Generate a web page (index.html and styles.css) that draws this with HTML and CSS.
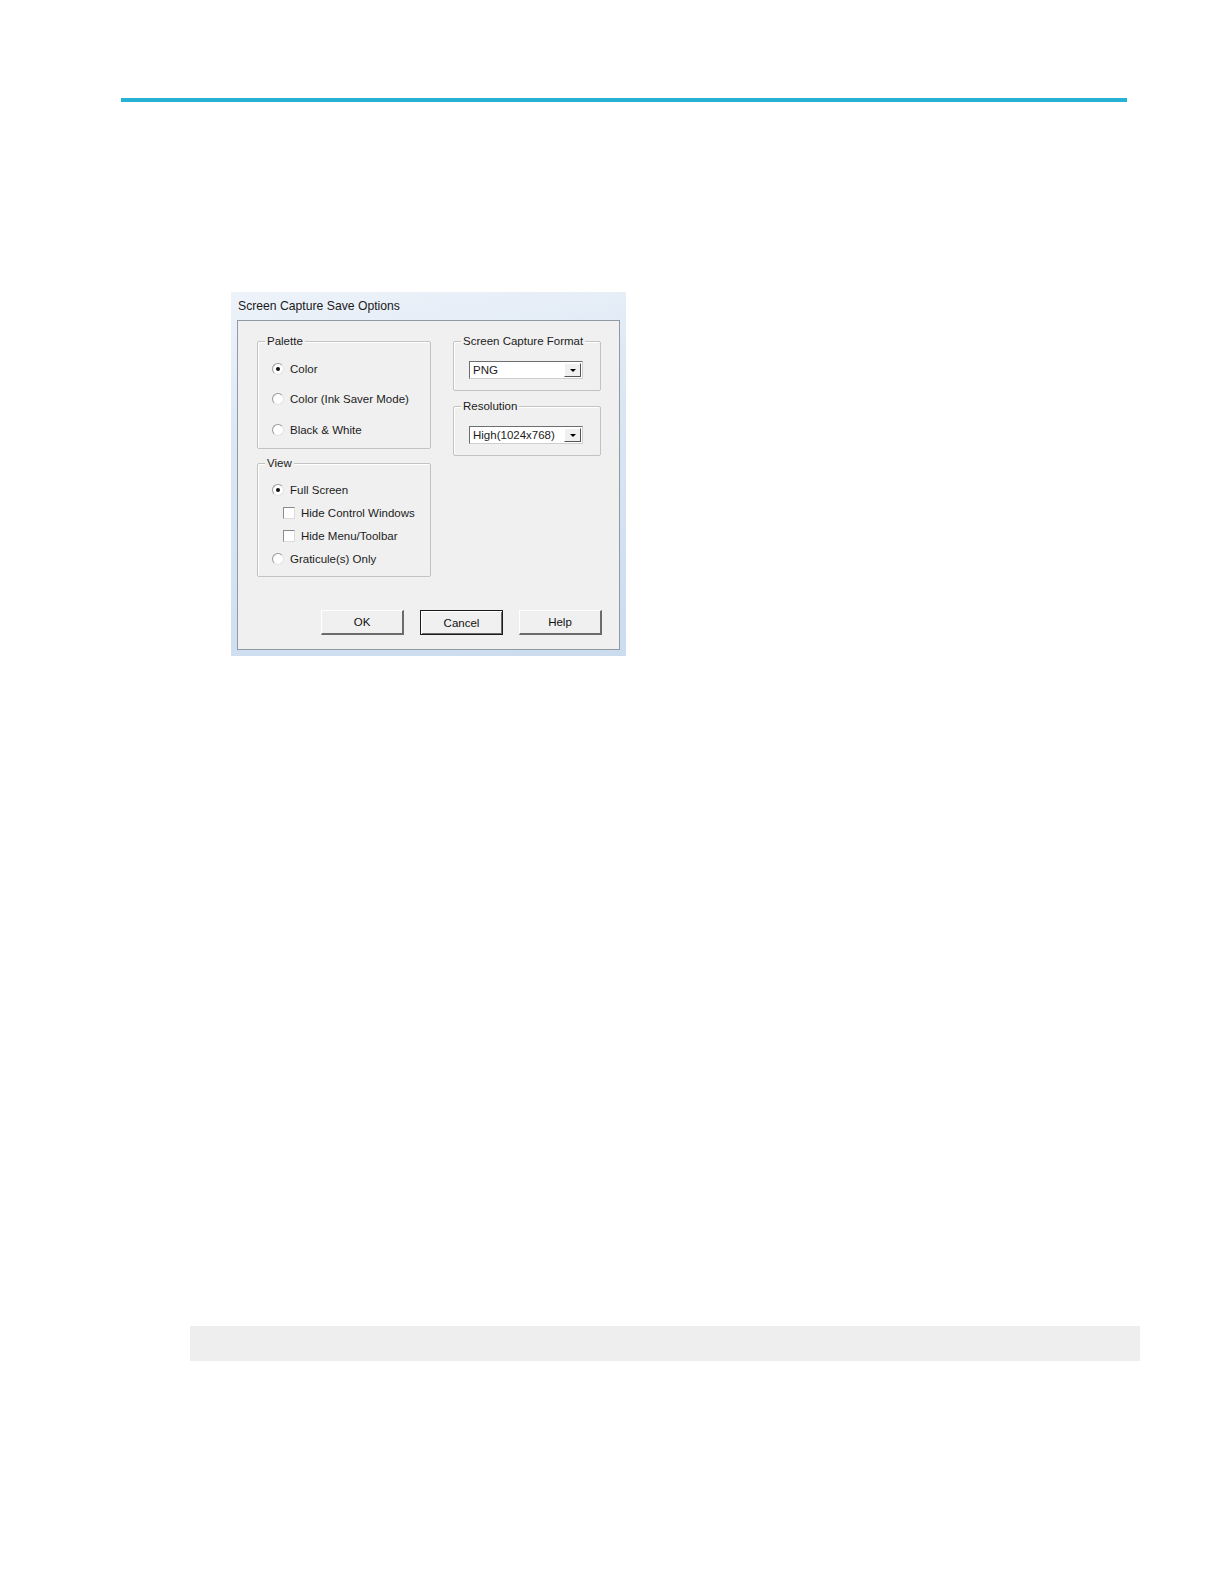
FILE: index.html
```html
<!DOCTYPE html>
<html>
<head>
<meta charset="utf-8">
<link rel="stylesheet" href="styles.css">
</head>
<body>
<div class="page">
  <div class="rule"></div>
  <div class="dialog">
    <div class="titlebar">Screen Capture Save Options</div>
    <div class="client">
      <div class="columns">
        <div class="col">
          <div class="group palette">
            <span class="legend">Palette</span>
            <div class="opt radio-row"><span class="radio checked"></span>Color</div>
            <div class="opt radio-row"><span class="radio"></span>Color (Ink Saver Mode)</div>
            <div class="opt radio-row"><span class="radio"></span>Black &amp; White</div>
          </div>
          <div class="group view">
            <span class="legend">View</span>
            <div class="vopt radio-row"><span class="radio checked"></span>Full Screen</div>
            <div class="vopt check-row"><span class="check"></span>Hide Control Windows</div>
            <div class="vopt check-row"><span class="check"></span>Hide Menu/Toolbar</div>
            <div class="vopt radio-row"><span class="radio"></span>Graticule(s) Only</div>
          </div>
        </div>
        <div class="col col-right">
          <div class="group small">
            <span class="legend">Screen Capture Format</span>
            <div class="select"><span class="sel-text">PNG</span><span class="sel-btn"><span class="tri"></span></span></div>
          </div>
          <div class="group small">
            <span class="legend">Resolution</span>
            <div class="select"><span class="sel-text">High(1024x768)</span><span class="sel-btn"><span class="tri"></span></span></div>
          </div>
        </div>
      </div>
      <div class="buttons">
        <div class="btn">OK</div>
        <div class="btn default">Cancel</div>
        <div class="btn">Help</div>
      </div>
    </div>
  </div>
  <div class="graybar"></div>
</div>
</body>
</html>
```
FILE: styles.css
```css
html, body {
  margin: 0;
  padding: 0;
  background: #ffffff;
}
.page {
  display: flex;
  flex-direction: column;
  align-items: flex-start;
  font-family: "Liberation Sans", Arial, sans-serif;
}
.rule {
  margin: 98px 0 0 121px;
  width: 1006px;
  height: 4px;
  background: #27b1d4;
}
.dialog {
  margin: 190px 0 0 231px;
  width: 395px;
  height: 364px;
  box-sizing: border-box;
  padding: 0 6px 6px 6px;
  display: flex;
  flex-direction: column;
  background: linear-gradient(170deg, #eef3fa 0%, #dce7f4 35%, #cbdcef 100%);
  border-radius: 1px;
}
.titlebar {
  height: 28px;
  display: flex;
  align-items: center;
  padding-left: 1px;
  font-size: 12.2px;
  color: #1a1a1a;
}
.client {
  flex: 1;
  background: #f0f0f0;
  border: 1px solid #8f9aa6;
  box-sizing: border-box;
  padding: 20px 0 0 19px;
  display: flex;
  flex-direction: column;
  font-size: 11.5px;
  color: #1c1c1c;
}
.columns {
  display: grid;
  grid-template-columns: 174px 148px;
  column-gap: 22px;
}
.col {
  display: flex;
  flex-direction: column;
  gap: 14px;
}
.col-right {
  gap: 15px;
}
.group {
  position: relative;
  border: 1px solid #c3c3c3;
  box-shadow: inset 1px 1px 0 #ffffff;
  box-sizing: border-box;
  border-radius: 2px;
}
.legend {
  position: absolute;
  top: -8px;
  left: 7px;
  padding: 0 2px;
  background: #f0f0f0;
  line-height: 15px;
}
.palette {
  height: 108px;
  padding-top: 12px;
}
.view {
  height: 114px;
  padding-top: 14px;
}
.small {
  height: 50px;
  padding: 19px 0 0 15px;
}
.opt {
  height: 30.3px;
}
.vopt {
  height: 23.2px;
}
.radio-row, .check-row {
  display: flex;
  align-items: center;
}
.radio-row {
  padding-left: 14px;
}
.check-row {
  padding-left: 25px;
}
.radio {
  width: 10px;
  height: 10px;
  border-radius: 50%;
  border: 1px solid #9a9a9a;
  border-right-color: #e2e2e2;
  border-bottom-color: #e2e2e2;
  background: #ffffff;
  margin-right: 6px;
  display: flex;
  align-items: center;
  justify-content: center;
}
.radio.checked::after {
  content: "";
  width: 4px;
  height: 4px;
  border-radius: 50%;
  background: #111111;
}
.check {
  width: 10px;
  height: 10px;
  border: 1px solid #8a8a8a;
  border-right-color: #dcdcdc;
  border-bottom-color: #dcdcdc;
  background: #ffffff;
  margin-right: 6px;
}
.select {
  width: 114px;
  height: 18px;
  box-sizing: border-box;
  border: 1px solid #6f6f6f;
  border-right-color: #cfcfcf;
  border-bottom-color: #cfcfcf;
  background: #ffffff;
  display: flex;
  align-items: center;
}
.sel-text {
  flex: 1;
  padding-left: 3px;
}
.sel-btn {
  width: 17px;
  height: 14px;
  margin-right: 1px;
  box-sizing: border-box;
  background: #f0f0f0;
  border: 1px solid #ffffff;
  border-right-color: #555555;
  border-bottom-color: #555555;
  display: flex;
  align-items: center;
  justify-content: center;
}
.tri {
  width: 0;
  height: 0;
  border-left: 3px solid transparent;
  border-right: 3px solid transparent;
  border-top: 3px solid #000000;
}
.buttons {
  margin-top: 33px;
  display: flex;
  justify-content: flex-end;
  gap: 16px;
  padding-right: 17px;
}
.btn {
  width: 83px;
  height: 25px;
  box-sizing: border-box;
  background: #f0f0f0;
  border: 1px solid #ffffff;
  border-right: 2px solid #6b6b6b;
  border-bottom: 2px solid #6b6b6b;
  display: flex;
  align-items: center;
  justify-content: center;
  color: #111111;
}
.btn.default {
  border: 1px solid #1a1a1a;
  box-shadow: inset 1px 1px 0 #ffffff, inset -1px -1px 0 #6b6b6b;
}
.graybar {
  margin: 670px 0 0 190px;
  width: 950px;
  height: 35px;
  background: #eeeeee;
}
```
